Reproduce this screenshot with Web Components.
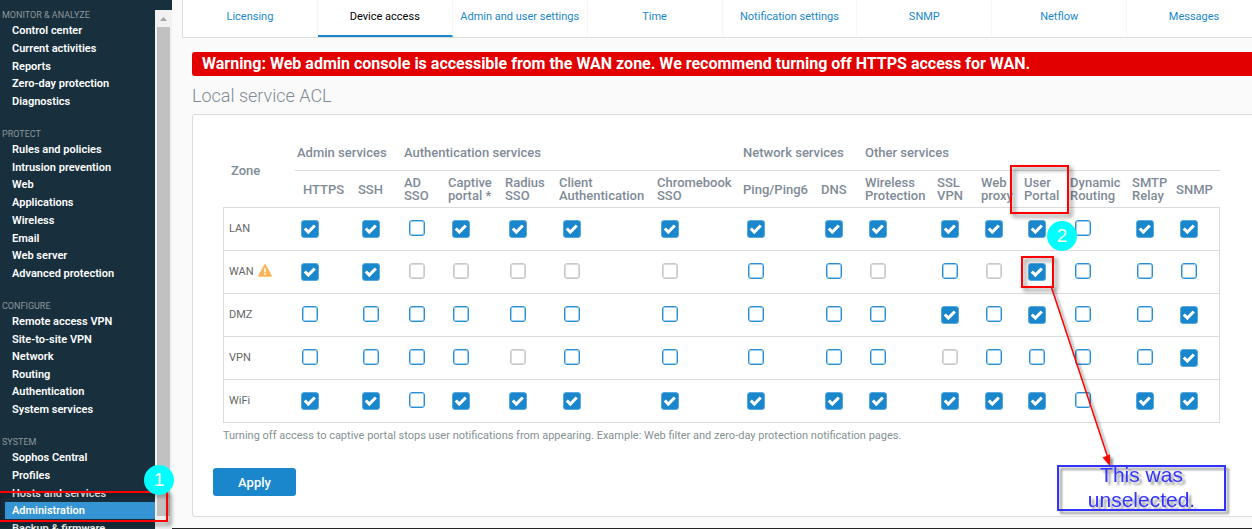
<!DOCTYPE html>
<html lang="en">
<head>
<meta charset="utf-8">
<title>Administration - Device access</title>
<style>
  body { margin: 0; overflow: hidden; background: #fafafa; font-family: Roboto, sans-serif; }
</style>
</head>
<body>
<admin-page></admin-page>

<script>
class SideNav extends HTMLElement {
  connectedCallback() {
    const groups = [
      ['MONITOR & ANALYZE', ['Control center', 'Current activities', 'Reports', 'Zero-day protection', 'Diagnostics']],
      ['PROTECT', ['Rules and policies', 'Intrusion prevention', 'Web', 'Applications', 'Wireless', 'Email', 'Web server', 'Advanced protection']],
      ['CONFIGURE', ['Remote access VPN', 'Site-to-site VPN', 'Network', 'Routing', 'Authentication', 'System services']],
      ['SYSTEM', ['Sophos Central', 'Profiles', 'Hosts and services', 'Administration', 'Backup & firmware']]
    ];
    const esc = s => s.replace('&', '&amp;');
    this.attachShadow({ mode: 'open' }).innerHTML = `
      <style>
        :host { display: flex; overflow: hidden; background: #182f3d; }
        nav { flex: 1; padding-top: 8px; }
        section { padding-bottom: 17px; }
        h2 { margin: 0; padding-left: 2px; font-size: 9px; line-height: 14px; font-weight: 400; color: #8d979b; }
        ul { list-style: none; margin: 0; padding: 0; display: flex; flex-direction: column; justify-content: space-between; min-height: 88px; }
        ul.n8 { min-height: 141px; }
        ul.n6 { min-height: 105px; }
        a { display: block; margin-left: 5px; padding-left: 7px; font-size: 11px; line-height: 17px; font-weight: 600; color: #fff; text-decoration: none; white-space: nowrap; }
        a[aria-current] { background: #3494d4; }
        .bar { width: 17px; margin-top: 10px; background: #f1f1f1; display: flex; flex-direction: column; align-items: center; }
        .bar svg { display: block; flex: none; }
        .thumb { width: 13px; flex: 1; margin-bottom: 13px; background: #c1c1c1; }
      </style>
      <nav aria-label="Main">${groups.map(([t, items]) => `<section><h2>${esc(t)}</h2><ul class="n${items.length}">${items.map(i =>
        `<li><a href="#"${i === 'Administration' ? ' aria-current="page"' : ''}>${esc(i)}</a></li>`).join('')}</ul></section>`).join('')}</nav>
      <div class="bar"><svg width="17" height="17"><path d="M5 11l3.5-4 3.5 4z" fill="#a3a3a3"/></svg><div class="thumb"></div></div>`;
  }
}

class TabBar extends HTMLElement {
  connectedCallback() {
    const tabs = ['Licensing', 'Device access', 'Admin and user settings', 'Time', 'Notification settings', 'SNMP', 'Netflow', 'Messages'];
    this.attachShadow({ mode: 'open' }).innerHTML = `
      <style>
        :host { display: block; }
        nav { display: grid; grid-template-columns: repeat(8, minmax(0, 1fr)); background: #fff; border: solid #dcdddf; border-width: 0 0 1px 1px; }
        a { display: block; height: 37px; box-sizing: border-box; font-size: 11px; line-height: 34px; text-align: center; white-space: nowrap; color: #1a87cd; text-decoration: none; border-right: 1px solid #f6f6f6; }
        a[aria-current] { color: #000; border-bottom: 2px solid #1a87cd; }
      </style>
      <nav aria-label="Sections">${tabs.map(t => `<a href="#"${t === 'Device access' ? ' aria-current="page"' : ''}>${t}</a>`).join('')}</nav>`;
  }
}

class WarningBanner extends HTMLElement {
  connectedCallback() {
    this.attachShadow({ mode: 'open' }).innerHTML = `
      <style>
        :host { display: block; padding-left: 10px; border-radius: 3px 0 0 3px; background: #e20000; color: #fff; font-size: 16px; line-height: 24px; font-weight: 700; white-space: nowrap; }
      </style><slot></slot>`;
  }
}

class AclTable extends HTMLElement {
  connectedCallback() {
    const cols = ['HTTPS', 'SSH', 'AD SSO', 'Captive portal *', 'Radius SSO', 'Client Authentication', 'Chromebook SSO', 'Ping/Ping6', 'DNS',
      'Wireless Protection', 'SSL VPN', 'Web proxy', 'User Portal', 'Dynamic Routing', 'SMTP Relay', 'SNMP'];
    const widths = [72, 61, 46, 44, 57, 54, 98, 86, 78, 44, 72, 44, 43, 46, 62, 44, 46];
    /* x: allowed, o: not allowed, d: not available for the zone */
    const zones = {
      LAN: 'xxoxxxxxxxxxxoxx', WAN: 'xxdddddoododxooo', DMZ: 'ooooooooooxoxoox',
      VPN: 'oooodooooodoooox', WiFi: 'xxoxxxxxxxxxxoxx'
    };
    const warn = '<svg width="14" height="13" viewBox="0 0 14 13" role="img" aria-label="Warning"><path d="M7 1 13 12H1z" fill="#fbb355" stroke="#fbb355" stroke-width="1.6" stroke-linejoin="round"/><path d="M7 4.2v4M7 9.3v1.6" stroke="#fff" stroke-width="1.6"/></svg>';
    this.attachShadow({ mode: 'open' }).innerHTML = `
      <style>
        :host { display: block; }
        table { width: 100%; table-layout: fixed; border-collapse: separate; border-spacing: 0; }
        th { box-sizing: border-box; padding: 0 0 0 2px; text-align: left; font-size: 13px; line-height: 13px; font-weight: 500; color: #7f8b97; white-space: nowrap; }
        thead th { height: 37px; border-bottom: 1px solid #dadbdd; }
        thead th.zone { padding-left: 8px; }
        thead th.first { padding-left: 8px; }
        td, tbody th { box-sizing: border-box; height: 43px; border-bottom: 1px solid #dadbdd; }
        tbody th { border-left: 1px solid #dadbdd; padding: 0 0 2px 5px; font-size: 11px; font-weight: 400; color: #666; }
        td { padding: 0 0 0 6px; vertical-align: middle; }
        td:last-child { border-right: 1px solid #dadbdd; }
        svg { vertical-align: -2px; margin-left: 2px; }
        input { display: block; appearance: none; box-sizing: border-box; width: 16px; height: 16px; margin: 0 1px 2px; border: 1px solid #2a8fd2; border-radius: 3px; background: #fff; box-shadow: inset 0 0 0 1px #9fcdec; }
        input:disabled { border-color: #c8c8c8; box-shadow: inset 0 0 0 1px #dadada; }
        input:checked { width: 18px; height: 18px; margin: 0; border-color: #5aa9de; box-shadow: none; background: #1a87cd url("data:image/svg+xml,%3Csvg xmlns='http://www.w3.org/2000/svg' viewBox='0 0 16 16'%3E%3Cpath d='M2.800 7.500l3.500 3.500 6.500-6.500' fill='none' stroke='white' stroke-width='3.100'/%3E%3C/svg%3E") center / 16px 16px no-repeat; }
      </style>
      <table>
        <colgroup>${widths.map(w => `<col style="width:${w}px">`).join('')}</colgroup>
        <thead>
          <tr><th class="zone" rowspan="2" scope="col">Zone</th><th colspan="2" scope="colgroup">Admin services</th><th colspan="5" scope="colgroup">Authentication services</th><th colspan="2" scope="colgroup">Network services</th><th colspan="7" scope="colgroup">Other services</th></tr>
          <tr>${cols.map((c, i) => `<th scope="col"${i ? '' : ' class="first"'}>${c.replace(' ', '<br>')}</th>`).join('')}</tr>
        </thead>
        <tbody>${Object.entries(zones).map(([z, s]) => `<tr><th scope="row">${z}${z === 'WAN' ? ' ' + warn : ''}</th>${[...s].map((v, i) =>
          `<td><input type="checkbox" aria-label="${z} ${cols[i]}"${v === 'x' ? ' checked' : v === 'd' ? ' disabled' : ''}></td>`).join('')}</tr>`).join('')}</tbody>
      </table>`;
  }
}

class AclCard extends HTMLElement {
  connectedCallback() {
    this.attachShadow({ mode: 'open' }).innerHTML = `
      <style>
        :host { display: block; padding: 19px 41px 20px 20px; background: #fff; border: 1px solid #dadbdd; border-radius: 3px; }
        acl-table, p { margin: 0 0 0 10px; }
        p { padding-top: 6px; font-size: 11px; line-height: 14px; color: #849193; }
        button { display: block; margin-top: 25px; width: 83px; height: 28px; padding: 0; border: 0; border-radius: 3px; background: #1a87cd; color: #fff; font: 500 13px Roboto, sans-serif; }
      </style>
      <acl-table></acl-table>
      <p>Turning off access to captive portal stops user notifications from appearing. Example: Web filter and zero-day protection notification pages.</p>
      <button type="button">Apply</button>`;
  }
}

/* Numbered steps, frames and the arrow that lie over the page */
class NoteLayer extends HTMLElement {
  connectedCallback() {
    this.attachShadow({ mode: 'open' }).innerHTML = `
      <style>
        :host { position: absolute; inset: 0; pointer-events: none; overflow: hidden; }
        div, svg { position: absolute; box-sizing: border-box; }
        .frame { border: 2px solid #f00; filter: drop-shadow(3px 3px 2px rgba(0,0,0,.55)); }
        .step { width: 30px; height: 30px; border-radius: 50%; background: #0ff; color: #fff; font: 19px/30px "Liberation Sans", sans-serif; text-align: center; }
        .f1 { left: -4px; top: 491px; width: 172px; height: 31px; }
        .f2 { left: 1010px; top: 165px; width: 59px; height: 49px; }
        .f3 { left: 1021px; top: 256px; width: 33px; height: 32px; }
        .s1 { left: 144px; top: 465px; }
        .s2 { left: 1047px; top: 221px; }
        svg { left: 1040px; top: 280px; filter: drop-shadow(3px 3px 1px rgba(0,0,0,.4)); }
        .text { left: 1057px; top: 465px; width: 169px; height: 46px; border: 2px solid #33f; color: #33f; font: 21px/25px "Liberation Sans", sans-serif; text-align: center; filter: drop-shadow(3px 3px 1px rgba(0,0,0,.4)); }
        .text span { display: block; margin-top: -5px; }
      </style>
      <div class="frame f1"></div><div class="frame f2"></div><div class="frame f3"></div>
      <svg width="80" height="190"><path d="M11 6 68 178" stroke="#f00" stroke-width="1.5"/><path d="M70 186 62.500 177.500 70 174.500z" fill="#f00"/></svg>
      <div class="step s1">1</div><div class="step s2">2</div>
      <div class="text"><span>This was<br>unselected.</span></div>`;
  }
}

class AdminPage extends HTMLElement {
  connectedCallback() {
    this.attachShadow({ mode: 'open' }).innerHTML = `
      <style>
        :host { display: flex; height: 100vh; position: relative; overflow: hidden; }
        side-nav { flex: none; width: 172px; }
        main { flex: 1 0 auto; width: calc(100% - 172px); margin-right: -10px; padding-left: 10px; box-sizing: border-box; min-width: 1090px; border-bottom: 1px solid #222; }
        warning-banner { margin: 14px 0 0 10px; }
        h1 { margin: 6px 0 5px 10px; font-size: 18px; line-height: 27px; font-weight: 300; color: #7f8b97; }
        acl-card { margin-left: 10px; }
      </style>
      <side-nav></side-nav>
      <main>
        <tab-bar></tab-bar>
        <warning-banner>Warning: Web admin console is accessible from the WAN zone. We recommend turning off HTTPS access for WAN.</warning-banner>
        <h1>Local service ACL</h1>
        <acl-card></acl-card>
      </main>
      <note-layer></note-layer>`;
  }
}

customElements.define('side-nav', SideNav);
customElements.define('tab-bar', TabBar);
customElements.define('warning-banner', WarningBanner);
customElements.define('acl-table', AclTable);
customElements.define('acl-card', AclCard);
customElements.define('note-layer', NoteLayer);
customElements.define('admin-page', AdminPage);
</script>
</body>
</html>
